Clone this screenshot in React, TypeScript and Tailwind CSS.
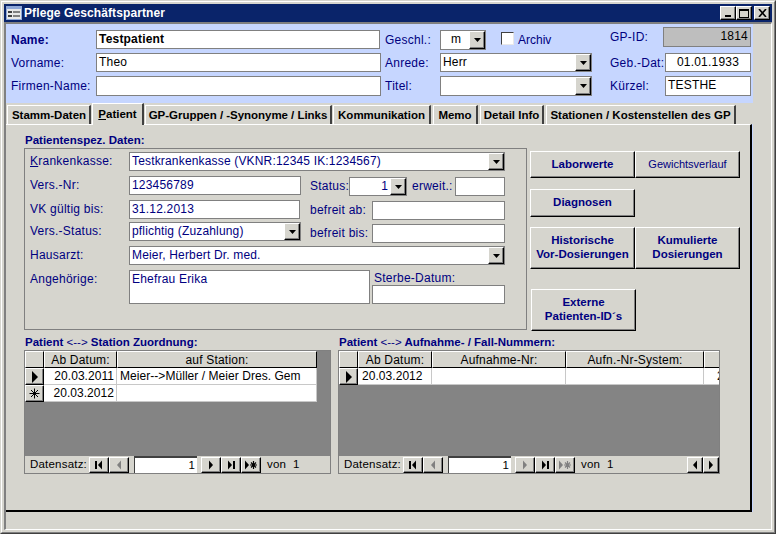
import type { ReactNode } from "react";

// Access 2000-style "Pflege Geschäftspartner" form

const raised = "border border-t-white border-l-white border-r-black border-b-black shadow-[inset_-1px_-1px_0_#808080]";

function Label({ className = "", children }: { className?: string; children: ReactNode }) {
  return <div className={`shrink-0 flex items-center whitespace-nowrap text-[#000080] text-[12px] tracking-[0.25px] ${className}`}>{children}</div>;
}

function Field({ className = "bg-white", children }: { className?: string; children?: ReactNode }) {
  return <div className={`shrink-0 flex items-center border border-[#808080] px-[2px] pb-[2px] whitespace-nowrap overflow-hidden text-[12px] tracking-[0.2px] ${className}`}>{children}</div>;
}

function DownArrow() {
  return (
    <svg width="7" height="4" viewBox="0 0 7 4">
      <polygon points="0,0 7,0 3.5,4" fill="#000" />
    </svg>
  );
}

function Combo({ className = "", children }: { className?: string; children?: ReactNode }) {
  return (
    <div className={`shrink-0 flex items-center border border-[#808080] bg-white pl-[2px] text-[12px] tracking-[0.17px] whitespace-nowrap overflow-hidden ${className}`}>
      <span className="flex-1 min-w-0 overflow-hidden pb-[2px]">{children}</span>
      <span className={`w-[16px] h-full flex items-center justify-center bg-[#d6d5ce] ${raised}`}>
        <DownArrow />
      </span>
    </div>
  );
}

function Btn({ className = "", bold = true, children }: { className?: string; bold?: boolean; children: ReactNode }) {
  return (
    <div className={`shrink-0 w-[105px] flex items-center justify-center pb-[2px] text-center leading-[14px] text-[#000080] ${bold ? "font-bold text-[11.5px]" : "text-[11px]"} ${raised} ${className}`}>
      {children}
    </div>
  );
}

function Tab({ className = "", active = false, children }: { className?: string; active?: boolean; children: ReactNode }) {
  return (
    <div
      className={`shrink-0 flex items-center justify-center font-bold text-[11.5px] text-black whitespace-nowrap border-t border-l border-t-white border-l-white border-r-2 border-r-[#404040] bg-[#d6d5ce] ${
        active ? "h-[22px] relative z-10 -mb-px" : "h-[19px] pt-[1px]"
      } ${className}`}
    >
      {children}
    </div>
  );
}

type NavKind = "first" | "prev" | "next" | "last" | "new" | "left" | "right";

function NavIcon({ kind, off }: { kind: NavKind; off: boolean }) {
  const c = off ? "#808080" : "#000";
  return (
    <svg width="14" height="10" viewBox="0 0 14 10">
      {kind === "first" && (
        <>
          <rect x="3" y="1" width="2" height="8" fill={c} />
          <polygon points="10,0.5 10,9.5 6,5" fill={c} />
        </>
      )}
      {kind === "prev" && <polygon points="9,0.5 9,9.5 5,5" fill={c} />}
      {kind === "next" && <polygon points="5,0.5 5,9.5 9,5" fill={c} />}
      {kind === "last" && (
        <>
          <polygon points="4,0.5 4,9.5 8,5" fill={c} />
          <rect x="9" y="1" width="2" height="8" fill={c} />
        </>
      )}
      {kind === "new" && (
        <>
          <polygon points="1,0.5 1,9.5 5,5" fill={c} />
          <path d="M9.5 1v8M6 5h7M7 2.5l5 5M12 2.5l-5 5" stroke={c} strokeWidth="1.2" />
        </>
      )}
      {kind === "left" && <polygon points="9,0.5 9,9.5 5,5" fill={c} />}
      {kind === "right" && <polygon points="5,0.5 5,9.5 9,5" fill={c} />}
    </svg>
  );
}

function NavBtn({ kind, off = false, className = "w-[20px]" }: { kind: NavKind; off?: boolean; className?: string }) {
  return (
    <div className={`shrink-0 h-[16px] flex items-center justify-center bg-[#d6d5ce] ${raised} ${className}`}>
      <NavIcon kind={kind} off={off} />
    </div>
  );
}

function NavBar({ nextOff = false, scroll = false }: { nextOff?: boolean; scroll?: boolean }) {
  return (
    <div className="h-[17px] flex items-center bg-[#d6d5ce] pl-[5px] text-[11.5px] tracking-[0.2px] text-black">
      <span className="w-[59px] shrink-0 whitespace-nowrap">Datensatz:</span>
      <NavBtn kind="first" />
      <NavBtn kind="prev" off />
      <div className="shrink-0 w-[63px] h-[17px] ml-[5px] flex items-center justify-end pr-[2px] bg-white border-t-2 border-l border-t-[#404040] border-l-[#404040]">1</div>
      <NavBtn kind="next" off={nextOff} className="w-[20px] ml-[4px]" />
      <NavBtn kind="last" />
      <NavBtn kind="new" off={nextOff} />
      <span className="ml-[6px] whitespace-nowrap">von&nbsp;&nbsp;1</span>
      {scroll && (
        <div className="ml-auto flex">
          <NavBtn kind="left" className="w-[16px]" />
          <NavBtn kind="right" className="w-[16px]" />
        </div>
      )}
    </div>
  );
}

function HeadCell({ className = "", children }: { className?: string; children?: ReactNode }) {
  return (
    <div className={`shrink-0 h-[17px] flex items-center justify-center whitespace-nowrap overflow-hidden bg-[#d6d5ce] border-t border-l border-t-white border-l-white border-b border-b-black text-[12px] tracking-[0.2px] ${className}`}>
      {children}
    </div>
  );
}

function RowCell({ className = "", children }: { className?: string; children?: ReactNode }) {
  return (
    <div className={`shrink-0 h-[17px] flex items-center whitespace-nowrap overflow-hidden bg-white border-b border-[#c8c8c8] text-[12px] tracking-[0.05px] ${className}`}>
      {children}
    </div>
  );
}

function Selector({ star = false }: { star?: boolean }) {
  return (
    <div className={`shrink-0 w-[19px] h-[17px] flex items-center justify-center bg-[#d6d5ce] ${raised}`}>
      {star ? (
        <svg width="11" height="11" viewBox="0 0 11 11">
          <path d="M5.5 0.5v10M0.5 5.5h10M2 2l7 7M9 2l-7 7" stroke="#000" strokeWidth="1" />
        </svg>
      ) : (
        <svg width="8" height="12" viewBox="0 0 8 12">
          <polygon points="1,0 7,6 1,12" fill="#000" />
        </svg>
      )}
    </div>
  );
}

export default function App() {
  return (
    <div className="w-[776px] h-[534px] overflow-hidden bg-[#d6d5ce] border border-r-[#404040] border-b-[#404040] border-t-[#d6d5ce] border-l-[#d6d5ce] font-['Liberation_Sans',Arial,sans-serif] text-black">
      <div className="h-full border border-t-white border-l-white border-r-[#808080] border-b-[#808080] p-[2px] flex flex-col">
        {/* title bar */}
        <div className="h-[18px] shrink-0 flex items-center bg-[#0a246a] pl-[2px] pr-[2px]">
          <svg width="16" height="14" viewBox="0 0 16 14" className="shrink-0">
            <rect x="0" y="0" width="16" height="14" fill="#8fa8d8" />
            <rect x="1" y="3" width="14" height="10" fill="#e8e8e8" />
            <rect x="2" y="5" width="4" height="2" fill="#404040" />
            <rect x="7" y="5" width="7" height="2" fill="#808080" />
            <rect x="2" y="9" width="4" height="2" fill="#404040" />
            <rect x="7" y="9" width="7" height="2" fill="#808080" />
          </svg>
          <span className="ml-[2px] text-white font-bold text-[12px] tracking-[0.1px] whitespace-nowrap">Pflege Geschäftspartner</span>
          <div className="ml-auto flex">
            <div className={`w-[16px] h-[14px] flex items-end justify-center pb-[2px] bg-[#d6d5ce] ${raised}`}>
              <span className="block w-[6px] h-[2px] bg-black" />
            </div>
            <div className={`w-[16px] h-[14px] flex items-center justify-center bg-[#d6d5ce] ${raised}`}>
              <span className="block w-[10px] h-[9px] border border-t-2 border-black" />
            </div>
            <div className={`ml-[2px] w-[16px] h-[14px] flex items-center justify-center bg-[#d6d5ce] ${raised}`}>
              <svg width="9" height="8" viewBox="0 0 9 8">
                <path d="M1 0l7 8M8 0l-7 8" stroke="#000" strokeWidth="1.6" />
              </svg>
            </div>
          </div>
        </div>

        {/* client area */}
        <div className="flex-1 min-h-0 flex flex-col border-t-2 border-l-2 border-t-[#808080] border-l-[#808080] border-r border-b border-r-white border-b-white">
          <div className="h-[488px] shrink-0 flex">
            <div className="w-[747px] shrink-0 flex flex-col bg-[#c6d6ff]">
              {/* header fields */}
              <div className="h-[79px] shrink-0 pl-[5px] pt-[6px]">
                <div className="flex h-[19px] text-black">
                  <Label className="w-[85px] h-full font-bold">Name:</Label>
                  <Field className="w-[284px] h-[19px] bg-white font-bold">Testpatient</Field>
                  <Label className="ml-[5px] w-[55px] h-full">Geschl.:</Label>
                  <Combo className="w-[46px] h-[20px]"><span className="pl-[8px]">m</span></Combo>
                  <div className="ml-[15px] mt-[2px] w-[13px] h-[13px] shrink-0 bg-white border border-t-[#404040] border-l-[#404040] border-r-[#e8e8e8] border-b-[#e8e8e8]" />
                  <Label className="ml-[4px] w-[92px] h-full tracking-[0px]">Archiv</Label>
                  <Label className="w-[53px] h-[19px] -mt-[3px]">GP-ID:</Label>
                  <Field className="w-[88px] h-[20px] -mt-[3px] justify-end bg-[#bebebe]">1814</Field>
                </div>
                <div className="flex h-[19px] mt-[4px] text-black">
                  <Label className="w-[85px] h-full">Vorname:</Label>
                  <Field className="w-[285px] h-[19px] bg-white">Theo</Field>
                  <Label className="ml-[4px] w-[55px] h-full">Anrede:</Label>
                  <Combo className="w-[152px] h-[19px]">Herr</Combo>
                  <Label className="ml-[18px] w-[55px] h-full">Geb.-Dat:</Label>
                  <Field className="w-[86px] h-[19px] bg-white justify-center">01.01.1933</Field>
                </div>
                <div className="flex h-[20px] mt-[4px] text-black">
                  <Label className="w-[85px] h-full">Firmen-Name:</Label>
                  <Field className="w-[285px] h-[20px] bg-white" />
                  <Label className="ml-[4px] w-[55px] h-full">Titel:</Label>
                  <Combo className="w-[152px] h-[20px]" />
                  <Label className="ml-[18px] w-[55px] h-full">Kürzel:</Label>
                  <Field className="w-[86px] h-[20px] bg-white">TESTHE</Field>
                </div>
              </div>

              {/* tabs */}
              <div className="h-[21px] shrink-0 flex items-end pl-[1px] bg-[#d6d5ce]">
                <Tab className="w-[84px] pl-[1px]">Stamm-Daten</Tab>
                <Tab active className="ml-[1px] w-[52px]"><span><span className="underline">P</span>atient</span></Tab>
                <Tab className="ml-[1px] w-[187px] tracking-[-0.03px]">GP-Gruppen / -Synonyme / Links</Tab>
                <Tab className="ml-[1px] w-[98px]">Kommunikation</Tab>
                <Tab className="ml-[2px] w-[45px]">Memo</Tab>
                <Tab className="ml-[2px] w-[64px]">Detail Info</Tab>
                <Tab className="ml-[2px] w-[190px]">Stationen / Kostenstellen des GP</Tab>
              </div>

              {/* tab page */}
              <div className="flex-1 min-h-0 w-[746px] bg-[#d6d5ce] border-t border-t-white border-r-2 border-b-2 border-r-black border-b-black pl-[18px] pt-[8px]">
                <div className="flex h-[198px]">
                  <div className="w-[503px] shrink-0">
                    <div className="h-[15px] flex items-center font-bold text-[#000080] text-[11.5px] pl-[1px]">Patientenspez. Daten:</div>
                    <div className="h-[182px] border border-[#808080] pl-[5px] pt-[3px] text-[#000080]">
                      <div className="flex h-[19px]">
                        <Label className="w-[99px] h-full pb-[2px]"><span><span className="underline">K</span>rankenkasse:</span></Label>
                        <Combo className="w-[376px] h-[19px]">Testkrankenkasse (VKNR:12345 IK:1234567)</Combo>
                      </div>
                      <div className="flex h-[20px] mt-[5px]">
                        <Label className="w-[99px] h-[19px] pb-[2px]">Vers.-Nr:</Label>
                        <Field className="w-[172px] h-[19px] bg-white">123456789</Field>
                        <Label className="ml-[9px] w-[39px] h-[20px]">Status:</Label>
                        <Combo className="w-[58px] h-[19px] mt-[1px]"><span className="block text-right pr-[2px]">1</span></Combo>
                        <Label className="ml-[5px] w-[43px] h-[20px]">erweit.:</Label>
                        <Field className="w-[50px] h-[19px] mt-[1px] bg-white" />
                      </div>
                      <div className="flex h-[20px] mt-[4px]">
                        <Label className="w-[99px] h-[19px] pb-[2px]">VK gültig bis:</Label>
                        <Field className="w-[171px] h-[19px] bg-white">31.12.2013</Field>
                        <Label className="ml-[10px] w-[62px] h-[20px]">befreit ab:</Label>
                        <Field className="w-[133px] h-[19px] mt-[1px] bg-white" />
                      </div>
                      <div className="flex h-[21px] mt-[2px]">
                        <Label className="w-[99px] h-[19px] pb-[2px]">Vers.-Status:</Label>
                        <Combo className="w-[172px] h-[19px]">pflichtig (Zuzahlung)</Combo>
                        <Label className="ml-[9px] w-[62px] h-[21px]">befreit bis:</Label>
                        <Field className="w-[133px] h-[19px] mt-[2px] bg-white" />
                      </div>
                      <div className="flex h-[19px] mt-[3px]">
                        <Label className="w-[99px] h-full pb-[2px]">Hausarzt:</Label>
                        <Combo className="w-[376px] h-[19px]">Meier, Herbert Dr. med.</Combo>
                      </div>
                      <div className="flex mt-[5px]">
                        <Label className="w-[99px] h-[17px] items-start">Angehörige:</Label>
                        <Field className="w-[241px] h-[34px] items-start leading-[16px] bg-white">Ehefrau Erika</Field>
                        <div className="ml-[2px] w-[133px] shrink-0">
                          <Label className="h-[15px] pl-[2px]">Sterbe-Datum:</Label>
                          <Field className="w-[133px] h-[19px] bg-white" />
                        </div>
                      </div>
                    </div>
                  </div>
                  <div className="ml-[3px] pt-[18px] w-[210px] shrink-0">
                    <div className="flex h-[27px]">
                      <Btn>Laborwerte</Btn>
                      <Btn bold={false}>Gewichtsverlauf</Btn>
                    </div>
                    <div className="flex h-[28px] mt-[11px]">
                      <Btn>Diagnosen</Btn>
                    </div>
                    <div className="flex h-[42px] mt-[10px]">
                      <Btn>Historische<br />Vor-Dosierungen</Btn>
                      <Btn>Kumulierte<br />Dosierungen</Btn>
                    </div>
                    <div className="flex h-[42px] mt-[20px] pl-[1px]">
                      <Btn>Externe<br />Patienten-ID´s</Btn>
                    </div>
                  </div>
                </div>

                {/* subforms */}
                <div className="flex mt-[5px]">
                  <div className="w-[307px] shrink-0">
                    <div className="h-[14px] flex items-center pl-[1px] font-bold text-[#000080] text-[11.5px] whitespace-pre">Patient <span className="font-normal">&lt;--&gt;</span> Station Zuordnung:</div>
                    <div className="h-[124px] border border-[#808080] flex flex-col bg-[#848484]">
                      <div className="flex-1 min-h-0">
                        <div className="flex">
                          <HeadCell className="w-[19px] border-r border-r-black" />
                          <HeadCell className="w-[73px] border-r border-r-black">Ab Datum:</HeadCell>
                          <HeadCell className="w-[200px] border-r border-r-black">auf Station:</HeadCell>
                        </div>
                        <div className="flex">
                          <Selector />
                          <RowCell className="w-[73px] justify-end pr-[2px] border-r">20.03.2011</RowCell>
                          <RowCell className="w-[200px] pl-[3px] border-r">Meier--&gt;Müller / Meier Dres. Gem</RowCell>
                        </div>
                        <div className="flex">
                          <Selector star />
                          <RowCell className="w-[73px] justify-end pr-[2px] border-r">20.03.2012</RowCell>
                          <RowCell className="w-[200px] border-r" />
                        </div>
                      </div>
                      <NavBar />
                    </div>
                  </div>
                  <div className="ml-[7px] w-[382px] shrink-0">
                    <div className="h-[14px] flex items-center pl-[1px] font-bold text-[#000080] text-[11.5px] whitespace-pre">Patient <span className="font-normal">&lt;--&gt;</span> Aufnahme- / Fall-Nummern:</div>
                    <div className="h-[124px] border border-[#808080] flex flex-col bg-[#848484]">
                      <div className="flex-1 min-h-0 overflow-hidden">
                        <div className="flex">
                          <HeadCell className="w-[19px] border-r border-r-black" />
                          <HeadCell className="w-[74px] border-r border-r-black">Ab Datum:</HeadCell>
                          <HeadCell className="w-[134px] border-r border-r-black">Aufnahme-Nr:</HeadCell>
                          <HeadCell className="w-[138px] border-r border-r-black">Aufn.-Nr-System:</HeadCell>
                          <HeadCell className="w-[15px]" />
                        </div>
                        <div className="flex">
                          <Selector />
                          <RowCell className="w-[74px] pl-[4px] border-r">20.03.2012</RowCell>
                          <RowCell className="w-[134px] border-r" />
                          <RowCell className="w-[138px] border-r" />
                          <RowCell className="w-[15px] pl-[13px]">2</RowCell>
                        </div>
                      </div>
                      <NavBar nextOff scroll />
                    </div>
                  </div>
                </div>
              </div>
            </div>
          </div>
        </div>
      </div>
    </div>
  );
}
